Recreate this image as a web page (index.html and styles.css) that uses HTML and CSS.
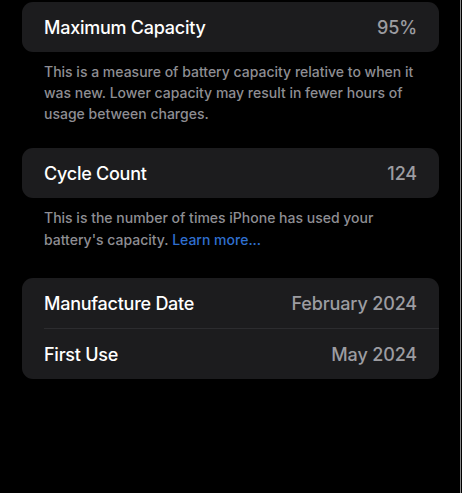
FILE: index.html
```html
<!DOCTYPE html>
<html>
<head>
<meta charset="utf-8">
<link rel="stylesheet" href="styles.css">
</head>
<body>
<div class="screen">
  <div class="card">
    <div class="row"><span class="label">Maximum Capacity</span><span class="value">95%</span></div>
  </div>
  <p class="note note-1">This is a measure of battery capacity relative to when it was new. Lower capacity may result in fewer hours of usage between charges.</p>
  <div class="card">
    <div class="row"><span class="label">Cycle Count</span><span class="value">124</span></div>
  </div>
  <p class="note note-2">This is the number of times iPhone has used your battery's capacity. <a class="link">Learn more...</a></p>
  <div class="card">
    <div class="row"><span class="label">Manufacture Date</span><span class="value">February 2024</span></div>
    <div class="divider"></div>
    <div class="row"><span class="label">First Use</span><span class="value">May 2024</span></div>
  </div>
</div>
</body>
</html>
```
FILE: styles.css
```css
html, body {
  margin: 0;
  padding: 0;
  background: #000;
}
body {
  font-family: Inter, "Noto Sans", "Liberation Sans", sans-serif;
}
.screen {
  width: 461px;
  height: 493px;
  box-sizing: border-box;
  border-right: 1px solid #8a8a8a;
  padding: 2px 22px 0 22px;
  display: flex;
  flex-direction: column;
}
.card {
  width: 417px;
  background: #1c1c1e;
  border-radius: 11px;
  display: flex;
  flex-direction: column;
}
.row {
  height: 50px;
  display: flex;
  align-items: center;
  justify-content: space-between;
  padding: 0 22px;
}
.label {
  color: #fff;
  font-size: 18px;
  font-weight: 500;
  letter-spacing: -0.25px;
}
.value {
  color: #9c9ca1;
  font-size: 18px;
  font-weight: 500;
  letter-spacing: -0.15px;
}
.divider {
  height: 1px;
  background: #2c2c2f;
  margin-left: 22px;
}
.note {
  margin: 0;
  padding: 0 22px;
  color: #8e8e93;
  font-size: 14px;
  font-weight: 500;
  line-height: 21px;
}
.note-1 {
  margin-top: 9px;
  margin-bottom: 24px;
}
.note-2 {
  margin-top: 9px;
  margin-bottom: 27px;
  line-height: 22px;
}
.link {
  color: #2f6fd0;
}
```
